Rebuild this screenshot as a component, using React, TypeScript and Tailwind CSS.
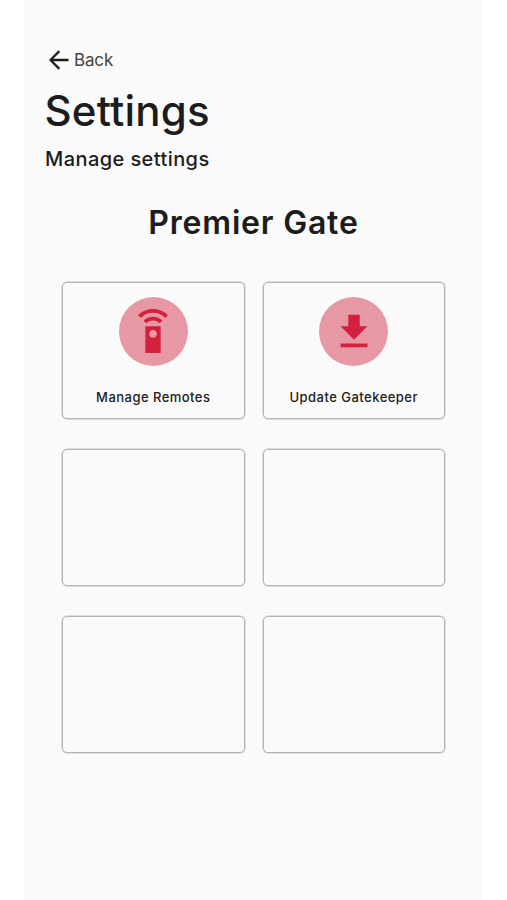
import type { ReactNode } from 'react';
import { MdFileDownload } from 'react-icons/md';

interface Tile {
  label: string;
  icon: ReactNode;
}

function ArrowLeftIcon() {
  return (
    <svg className="h-5 w-5" viewBox="0 0 20 20" fill="none" stroke="currentColor" strokeWidth="2.3">
      <path d="M19.5 10H1.8M10.3 1.1 1.5 10l8.8 8.9" />
    </svg>
  );
}

function RemoteIcon() {
  return (
    <svg className="h-[46px] w-[46px]" viewBox="0 0 24 24" fill="currentColor">
      <path d="M16 9H8v14h8V9zm-4 6c-1.1 0-2-.9-2-2s.9-2 2-2 2 .9 2 2-.9 2-2 2z" />
      <path d="M7.05 6.05l1.41 1.41C9.37 6.56 10.62 6 12 6s2.63.56 3.54 1.46l1.41-1.41C15.68 4.78 13.93 4 12 4s-3.68.78-4.95 2.05z" />
      <path d="M12 0C8.96 0 6.21 1.23 4.22 3.22l1.41 1.41C7.26 3.01 9.51 2 12 2s4.74 1.01 6.36 2.64l1.41-1.41C17.79 1.23 15.04 0 12 0z" />
    </svg>
  );
}

const tiles: (Tile | null)[] = [
  { label: 'Manage Remotes', icon: <RemoteIcon /> },
  { label: 'Update Gatekeeper', icon: <MdFileDownload className="h-[46px] w-[46px]" /> },
  null,
  null,
  null,
  null,
];

function SettingsTile({ tile }: { tile: Tile | null }) {
  const frame =
    'flex h-[137px] w-full flex-col items-center rounded-[5px] border border-[#b4b4b4] pt-3.5 shadow-[0_0_0_0.5px_#c4c4c4]';
  if (!tile) return <div className={frame} />;

  return (
    <button type="button" className={frame}>
      <span className="flex h-[69px] w-[69px] items-center justify-center rounded-full bg-[#e699a4] text-[#d3213d]">
        {tile.icon}
      </span>
      <span className="mt-[21px] text-[13px] leading-5 font-medium tracking-[0.47px] whitespace-nowrap">
        {tile.label}
      </span>
    </button>
  );
}

export default function App() {
  return (
    <div className="h-[900px] w-[507px] overflow-hidden bg-white pl-6 font-['Inter',sans-serif] text-[#1c1c1c]">
      <main className="h-full w-[458px] bg-[#fafafa] pt-12">
        <button type="button" className="ml-[25px] flex h-6 items-center gap-[5px]">
          <ArrowLeftIcon />
          <span className="text-[17px] leading-6 tracking-[-0.15px] text-[#444]">Back</span>
        </button>
        <h1 className="mt-3.5 ml-[20.5px] text-[42px] leading-[50px] font-[450] tracking-[0.2px]">Settings</h1>
        <p className="mt-[11px] ml-[21px] text-[20px] leading-6 font-medium tracking-[0.42px]">Manage settings</p>
        <h2 className="mt-8 pl-px text-center text-[32px] leading-10 font-semibold tracking-[0.8px]">Premier Gate</h2>
        <div className="mt-[39px] ml-[38px] grid w-[383px] grid-cols-2 gap-x-[18px] gap-y-[30px]">
          {tiles.map((tile, i) => (
            <SettingsTile key={i} tile={tile} />
          ))}
        </div>
      </main>
    </div>
  );
}
